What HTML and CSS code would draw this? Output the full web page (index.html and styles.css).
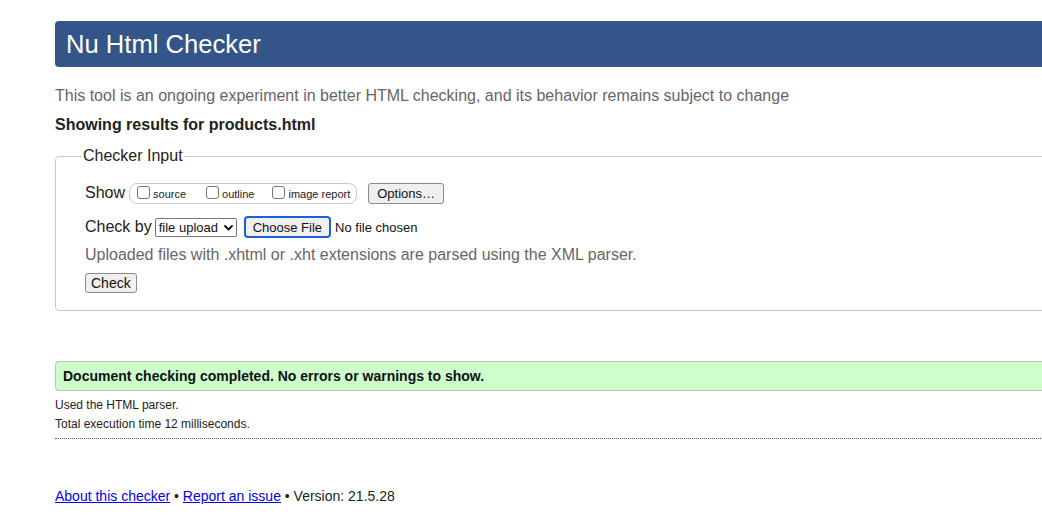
FILE: index.html
```html
<!DOCTYPE html>
<html lang="en">
<head>
<meta charset="utf-8">
<title>Nu Html Checker</title>
<link rel="stylesheet" href="styles.css">
</head>
<body>
<div class="page">
  <h1 class="title">Nu Html Checker</h1>
  <p class="intro">This tool is an ongoing experiment in better HTML checking, and its behavior remains subject to change</p>
  <p class="showing">Showing results for products.html</p>
  <form class="form">
    <fieldset class="fs">
      <legend class="legend">Checker Input</legend>
      <div class="row row-show">
        <span class="label">Show</span>
        <span class="opts">
          <label class="opt"><input type="checkbox" class="cb">source</label>
          <label class="opt"><input type="checkbox" class="cb">outline</label>
          <label class="opt"><input type="checkbox" class="cb">image report</label>
        </span>
        <button type="button" class="btn btn-options">Options…</button>
      </div>
      <div class="row row-check">
        <span class="label">Check by</span>
        <span class="select-wrap">
          <select class="select"><option>file upload</option></select>
          <svg class="chev" width="9" height="6" viewBox="0 0 9 6"><path d="M1 1 L4.5 4.5 L8 1" fill="none" stroke="#111" stroke-width="1.8" stroke-linecap="round" stroke-linejoin="round"/></svg>
        </span>
        <button type="button" class="btn btn-file">Choose File</button>
        <span class="nofile">No file chosen</span>
      </div>
      <p class="note">Uploaded files with .xhtml or .xht extensions are parsed using the XML parser.</p>
      <div class="row row-submit">
        <button type="button" class="btn btn-check">Check</button>
      </div>
    </fieldset>
  </form>
  <p class="success">Document checking completed. No errors or warnings to show.</p>
  <div class="meta-block">
    <p class="meta">Used the HTML parser.</p>
    <p class="meta">Total execution time 12 milliseconds.</p>
  </div>
  <hr class="sep">
  <p class="footer"><a href="#" class="link">About this checker</a> • <a href="#" class="link">Report an issue</a> • Version: 21.5.28</p>
</div>
</body>
</html>
```
FILE: styles.css
```css
html, body {
  margin: 0;
  padding: 0;
  overflow: hidden;
  background: #fff;
}
body {
  font-family: "Liberation Sans", Arial, Helvetica, sans-serif;
  color: #222;
}
.page {
  margin-left: 55px;
  width: 1060px;
  padding-top: 21px;
}
.title {
  margin: 0;
  height: 46px;
  box-sizing: border-box;
  background: #335588;
  color: #fff;
  font-weight: normal;
  font-size: 25.6px;
  line-height: 46px;
  padding-left: 11px;
  border-radius: 4px 0 0 4px;
}
.intro {
  margin: 19px 0 0;
  font-size: 16px;
  line-height: 20px;
  color: #666;
}
.showing {
  margin: 9px 0 0;
  font-size: 16px;
  line-height: 20px;
  font-weight: bold;
  color: #222;
}
.form {
  margin: 12px 0 0;
}
.fs {
  margin: 0;
  border: 1px solid #c8c8c8;
  border-radius: 4px 0 0 4px;
  padding: 17px 0 17px 29px;
  min-width: 0;
}
.legend {
  font-size: 16px;
  padding: 0 1px;
  margin-left: -3px;
  color: #222;
}
.row {
  display: flex;
  align-items: center;
}
.label {
  font-size: 16px;
  color: #222;
}
.row-show {
  height: 22px;
}
.opts {
  display: flex;
  align-items: center;
  margin-left: 4px;
  height: 19px;
  border: 1px solid #c8c8c8;
  border-radius: 8px;
  padding: 0 6px 0 7px;
  gap: 18px;
}
.opt {
  display: flex;
  align-items: center;
  font-size: 11px;
  color: #222;
  padding-top: 2px;
}
.opt:nth-child(2) { margin-left: 2px; }
.cb {
  appearance: none;
  width: 13px;
  height: 13px;
  margin: -3px 3px 0 0;
  border: 1px solid #767676;
  border-radius: 3px;
  background: #fff;
  box-sizing: border-box;
}
.btn {
  font-family: "Liberation Sans", Arial, Helvetica, sans-serif;
  font-size: 13px;
  color: #111;
  background: #efefef;
  border: 1px solid #8a8a8a;
  border-radius: 3px;
  padding: 0 6px;
  margin: 0;
}
.btn-options {
  margin-left: 11px;
  height: 21px;
  padding: 0 8px;
}
.row-check {
  margin-top: 12px;
  height: 22px;
}
.select-wrap {
  position: relative;
  margin-left: 3px;
  display: inline-flex;
}
.select {
  appearance: none;
  -webkit-appearance: none;
  font-family: "Liberation Sans", Arial, Helvetica, sans-serif;
  font-size: 13px;
  color: #111;
  height: 19px;
  width: 82px;
  border: 1px solid #767676;
  border-radius: 2px;
  background: #fff;
  padding: 0 0 0 3px;
  margin: 0;
}
.chev {
  position: absolute;
  right: 4px;
  top: 7px;
}
.btn-file {
  margin-left: 7px;
  height: 22px;
  border: 2px solid #1a5fd6;
  border-radius: 4px;
  padding: 0 7px;
}
.nofile {
  font-size: 13px;
  color: #111;
  margin-left: 4px;
}
.note {
  margin: 7px 0 0;
  font-size: 16px;
  line-height: 20px;
  color: #666;
}
.row-submit {
  margin-top: 8px;
}
.btn-check {
  height: 20px;
  padding: 0 5px;
  font-size: 14px;
}
.success {
  margin: 50px 0 0;
  height: 30px;
  box-sizing: border-box;
  background: #ccffcc;
  border: 1px solid #c0c0c0;
  border-right: 0;
  border-radius: 4px 0 0 4px;
  font-size: 14px;
  font-weight: bold;
  color: #111;
  line-height: 28px;
  padding-left: 7px;
}
.meta-block {
  padding-top: 2px;
}
.meta {
  margin: 5px 0 0;
  font-size: 12px;
  line-height: 14px;
  color: #222;
}
.sep {
  margin: 7px 0 0;
  border: 0;
  border-top: 1px dotted #555;
  height: 0;
}
.footer {
  margin: 49px 0 0;
  font-size: 14px;
  line-height: 16px;
  color: #222;
}
.link {
  color: #0000ee;
  text-decoration: underline;
}
```
